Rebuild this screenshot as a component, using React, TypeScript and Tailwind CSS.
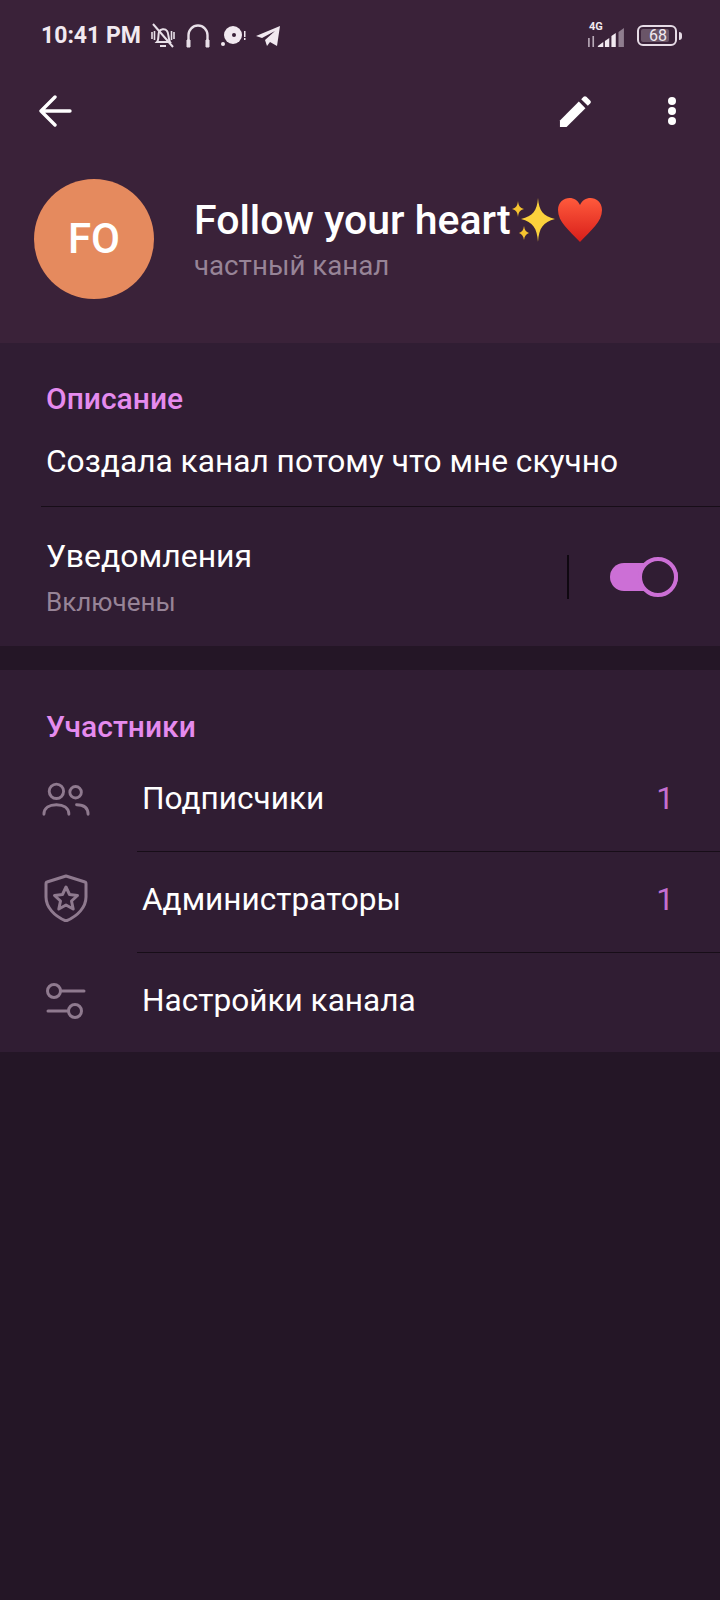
const font = { fontFamily: "Roboto, sans-serif" };

const StatusBar = () => (
  <div className="flex h-[70px] items-center pl-[41px] pr-[38px] pt-[1px] text-[#f1e9f0]">
    <span className="text-[23px] font-bold leading-none">10:41 PM</span>
    <svg className="ml-[9px]" width="26" height="26" viewBox="0 0 26 26" fill="none" stroke="#e8dfe8" strokeWidth="2">
      <path d="M7 19c2-2 1-7 2-10 1-3 6-4 8-1 2 2 1 8 3 11H7z" />
      <path d="M10 23h6M3 1l20 23" />
      <path d="M2 9v7M4.500 8v9M21.500 8v9M24 9v7" strokeWidth="1.600" />
    </svg>
    <svg className="ml-[9px]" width="26" height="26" viewBox="0 0 26 26" fill="none" stroke="#e8dfe8" strokeWidth="2.4">
      <path d="M3.500 19V12a9.500 9.500 0 0 1 19 0v7" />
      <path d="M2 17h3v7H2zM21 17h3v7h-3z" fill="#e8dfe8" strokeWidth="1" />
    </svg>
    <svg className="ml-[9px]" width="26" height="26" viewBox="0 0 26 26">
      <circle cx="13" cy="12" r="9" fill="#f1e9f0" />
      <circle cx="14" cy="12" r="2" fill="#3a2239" />
      <circle cx="3" cy="21" r="2" fill="#f1e9f0" />
      <path d="M24 8h1.500v6H24zM24 15h1.500v2H24z" fill="#f1e9f0" />
    </svg>
    <svg className="ml-[9px]" width="26" height="26" viewBox="0 0 26 26">
      <path d="M1 13 25 3l-3 20-7-4-3 4-2-6 10-9-13 7z" fill="#f1e9f0" />
    </svg>
    <div className="ml-auto flex items-center">
      <div className="relative h-[24px] w-[38px]">
        <span className="absolute left-[2px] top-[-3px] text-[11px] font-bold leading-none">4G</span>
        <svg className="absolute left-0 top-0" width="38" height="24" viewBox="0 0 35 24" preserveAspectRatio="none">
          <path d="M1 14h1.500v9H1zM5 12h1.500v11H5z" fill="#b9aab8" />
          <path d="M10 22l5-4v5h-5zM16.500 17l4-3v9h-4zM22.500 12l4-3v14h-4z" fill="#f1e9f0" />
          <path d="M29 8l5-4v19h-5z" fill="#8f7d8f" />
        </svg>
      </div>
      <div className="ml-[12px] flex items-center">
        <div className="flex h-[21px] w-[40px] items-center rounded-[6px] border-2 border-[#e6dbe6] p-[2px]">
          <div className="relative flex h-full w-[28px] items-center justify-center rounded-[2px] bg-[#6a5568]">
            <span className="pl-[6px] text-[16px] leading-none">68</span>
          </div>
        </div>
        <div className="ml-[2px] h-[8px] w-[3px] rounded-r-sm bg-[#e6dbe6]" />
      </div>
    </div>
  </div>
);

const Toolbar = () => (
  <div className="flex h-[76px] items-center pl-[38px] pr-[42px] pt-[5px]">
    <svg width="34" height="32" viewBox="0 0 34 32" fill="none" stroke="#ffffff" strokeWidth="3.4" strokeLinecap="round" strokeLinejoin="round">
      <path d="M32 16H3M17 2 3 16l14 14" />
    </svg>
    <svg className="ml-auto" width="34" height="34" viewBox="0 0 36 36" fill="#ffffff">
      <path d="M1 35v-7L21 8l7 7L8 35H1z" />
      <path d="M23.500 5.500 26 3c1-1 2-1 3 0l4 4c1 1 1 2 0 3l-2.500 2.500z" />
    </svg>
    <svg className="ml-[73px]" width="12" height="28" viewBox="0 0 12 28" fill="#ffffff">
      <circle cx="6" cy="4" r="4" />
      <circle cx="6" cy="14" r="4" />
      <circle cx="6" cy="24" r="4" />
    </svg>
  </div>
);

const Sparkles = () => (
  <svg width="46" height="46" viewBox="0 0 46 46" className="shrink-0">
    <path d="M27 1c1 13 5 18 17 21-12 3-16 9-17 23-1-14-5-20-17-23 12-3 16-8 17-21z" fill="#fbd13c" />
    <path d="M7 4c.6 5 2 7 6 8-4 1-5.400 3-6 8-.6-5-2-7-6-8 4-1 5.400-3 6-8z" fill="#f6c32f" />
    <path d="M13 29c.6 4 2 6 5 7-3 1-4.400 3-5 7-.6-4-2-6-5-7 3-1 4.400-3 5-7z" fill="#f6c32f" />
  </svg>
);

const Heart = () => (
  <svg width="46" height="46" viewBox="0 0 46 46" className="shrink-0">
    <defs>
      <linearGradient id="heart" x1="0" y1="0" x2="0" y2="1">
        <stop offset="0" stopColor="#ff5a3c" />
        <stop offset="1" stopColor="#d81e1a" />
      </linearGradient>
    </defs>
    <path d="M23 45C12 33 1 25 1 13 1 5 7 1 12.500 1 17 1 21 3.500 23 8c2-4.500 6-7 10.500-7C39 1 45 5 45 13c0 12-11 20-22 32z" fill="url(#heart)" />
  </svg>
);

const ProfileHeader = () => (
  <div className="flex h-[197px] items-start pl-[34px] pt-[33px]">
    <div className="flex h-[120px] w-[120px] items-center justify-center rounded-full bg-[#e58a5e] text-[42px] font-medium leading-none text-white">
      FO
    </div>
    <div className="ml-[40px] pt-[18px]">
      <div className="flex h-[46px] items-center">
        <span className="text-[41px] font-medium leading-none text-white">Follow your heart</span>
        <Sparkles />
        <Heart />
      </div>
      <div className="mt-[5px] text-[27.700px] leading-[36px] text-[#978497]">частный канал</div>
    </div>
  </div>
);

const Switch = () => (
  <div className="relative h-[28px] w-[68px] rounded-full bg-[#cc6fd6]">
    <div className="absolute right-0 top-[-6px] h-[40px] w-[40px] rounded-full border-[4px] border-[#cc6fd6] bg-[#301d33]" />
  </div>
);

const DescriptionSection = () => (
  <section className="h-[303px] bg-[#301d33]">
    <div className="pl-[46px] pt-[38px] text-[30px] font-medium leading-[36px] text-[#e58bee]">Описание</div>
    <div className="pl-[46px] pt-[25px] text-[31.700px] leading-[40px] text-white">Создала канал потому что мне скучно</div>
    <div className="ml-[41px] mt-[24px] h-px bg-[#170d18]" />
    <div className="flex items-start pl-[46px] pr-[42px] pt-[29px]">
      <div>
        <div className="text-[32px] leading-[40px] text-white">Уведомления</div>
        <div className="mt-[10px] text-[26px] leading-[32px] text-[#978497]">Включены</div>
      </div>
      <div className="ml-auto mt-[19px] h-[44px] w-[2px] bg-[#0f0810]" />
      <div className="ml-[41px] mt-[27px]">
        <Switch />
      </div>
    </div>
  </section>
);

const UsersIcon = () => (
  <svg width="48" height="36" viewBox="0 0 50 36" fill="none" stroke="#8f7a8f" strokeWidth="3" strokeLinecap="round">
    <circle cx="15" cy="10" r="7.500" />
    <circle cx="35" cy="11" r="6" />
    <path d="M2 34c0-7 6-10 13-10s13 3 13 10M36 24c7 0 12 3 12 10" />
  </svg>
);

const ShieldIcon = () => (
  <svg className="mb-[4px]" width="44" height="48" viewBox="0 0 44 48" fill="none" stroke="#8f7a8f" strokeWidth="3" strokeLinejoin="round">
    <path d="M22 2 41 8c1 0 1 1 1 2v13c0 10-8 19-20 24C10 42 2 33 2 23V10c0-1 0-2 1-2L22 2z" />
    <path d="m22 13 3.500 7.500 8 1-6 5.500 1.700 8L22 31l-7.200 4 1.700-8-6-5.500 8-1L22 13z" />
  </svg>
);

const SlidersIcon = () => (
  <svg className="mt-[2px]" width="40" height="38" viewBox="0 0 40 38" fill="none" stroke="#8f7a8f" strokeWidth="3" strokeLinecap="round">
    <circle cx="8" cy="8" r="6.500" />
    <path d="M15 8h23M2 28h20" />
    <circle cx="29" cy="28" r="6.500" />
  </svg>
);

const MemberRow = ({
  icon,
  label,
  count,
  divider,
  height,
}: {
  icon: React.ReactNode;
  label: string;
  count?: number;
  divider?: boolean;
  height: string;
}) => (
  <div className={`flex ${height} flex-col`}>
    <div className="flex flex-1 items-center pb-[4px]">
      <div className="flex w-[142px] items-center justify-center pr-[11px]">{icon}</div>
      <span className="text-[31.600px] leading-[40px] text-white">{label}</span>
      {count !== undefined && <span className="ml-auto pr-[46px] text-[31.600px] leading-[40px] text-[#c46fd0]">{count}</span>}
    </div>
    {divider && <div className="ml-[137px] h-px bg-[#170d18]" />}
  </div>
);

const MembersSection = () => (
  <section className="h-[382px] bg-[#301d33]">
    <div className="h-[81px] pl-[46px] pt-[39px] text-[30px] font-medium leading-[36px] text-[#e58bee]">Участники</div>
    <MemberRow height="h-[101px]" icon={<UsersIcon />} label="Подписчики" count={1} divider />
    <MemberRow height="h-[101px]" icon={<ShieldIcon />} label="Администраторы" count={1} divider />
    <MemberRow height="h-[99px]" icon={<SlidersIcon />} label="Настройки канала" />
  </section>
);

export default function App() {
  return (
    <div style={font} className="h-[1600px] w-[720px] overflow-hidden bg-[#241626]">
      <div className="h-[343px] bg-[#3a2239]">
        <StatusBar />
        <Toolbar />
        <ProfileHeader />
      </div>
      <DescriptionSection />
      <div className="h-[24px]" />
      <MembersSection />
    </div>
  );
}
